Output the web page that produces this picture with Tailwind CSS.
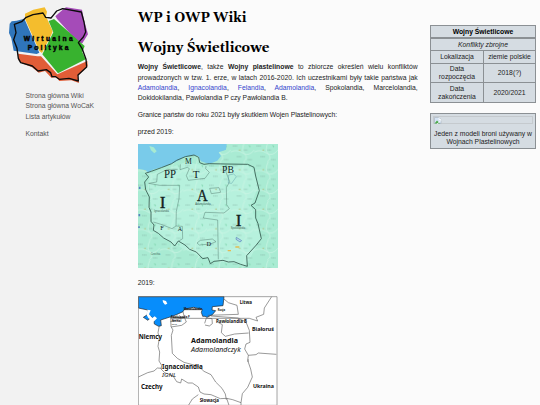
<!DOCTYPE html>
<html lang="pl">
<head>
<meta charset="utf-8">
<title>WP i OWP Wiki</title>
<script src="https://cdn.jsdelivr.net/npm/@tailwindcss/browser@4"></script>
</head>
<body class="w-[540px] h-[405px] overflow-hidden bg-[#fbfbfb] font-['Liberation_Sans',Arial,sans-serif] text-[6.8px] leading-[10.3px] text-[#222]">
<div class="flex h-[405px]">
  <aside class="w-[110px] shrink-0 bg-[#f2f2f2] text-[#555]">
    <svg class="block" width="110" height="90" viewBox="0 0 330 270">
      <path d="M29 71 L35 64 50 62 73 56 118 158 110 162 41 152 34 115 27 99Z" fill="#2f75bb"/>
      <path d="M75 41 L100 29 134 22 141 35 138 49 158 94 154 104 126 159 118 153 75 56Z" fill="#f4bd2d"/>
      <path d="M166 49 L188 29 198 22 246 29 252 60 264 103 247 130 236 129 172 58Z" fill="#a54bb8"/>
      <path d="M155 60 L162 57 254 138 247 157 257 178 174 220 127 163 160 97 146 63Z" fill="#38b22f"/>
      <path d="M54 161 L112 169 123 169 172 223 262 183 263 198 233 229 237 249 214 241 178 243 169 232 154 233 135 213 116 218 96 202 66 190 55 180Z" fill="#e15d37"/>
      <path d="M74 58L80 56 158 97 124 163 173 221M164 54L252 133" fill="none" stroke="#f7f7f2" stroke-width="0"/>
      <path d="M43 73 L65 65 77 53 99 44 129 39 137 52 153 54 162 43 170 33 188 26 244 36 252 66 257 96 250 111 235 128 246 145 258 178 260 201 234 225 235 243 207 235 178 238 167 230 156 230 152 218 139 209 114 213 97 198 62 188 55 175 51 145 41 119 48 98 45 82Z" fill="none" stroke="#0b0b0b" stroke-width="4" stroke-linejoin="round"/>
      <g font-family="Liberation Sans, Arial, sans-serif" font-weight="bold" font-size="20" fill="#050505" stroke="#050505" stroke-width="1.4">
        <text x="71" y="123" textLength="147">Wirtualna</text>
        <text x="83" y="150" textLength="122">Polityka</text>
      </g>
    </svg>
    <nav class="pl-[25.5px] pt-[1px] whitespace-nowrap">
      <div>Strona główna Wiki</div>
      <div>Strona główna WoCaK</div>
      <div>Lista artykułów</div>
      <div class="mt-[6.8px]">Kontakt</div>
    </nav>
  </aside>
  <main class="ml-[27.7px] w-[280px] shrink-0 whitespace-nowrap">
    <h1 class="mt-[8px] h-[20px] leading-[20px] font-[Gelasio,'Liberation_Serif',serif] font-bold text-black"><svg class="block overflow-visible" width="110" height="20"><text x="0" y="14.4" font-size="14.4" textLength="108.5" lengthAdjust="spacingAndGlyphs">WP i OWP Wiki</text></svg></h1>
    <h2 class="mt-[10px] h-[20px] leading-[20px] font-[Gelasio,'Liberation_Serif',serif] font-bold text-black"><svg class="block overflow-visible" width="132" height="20"><text x="0" y="14.2" font-size="14.4" textLength="131.5" lengthAdjust="spacingAndGlyphs">Wojny Świetlicowe</text></svg></h2>
    <div class="mt-[4.4px]">
      <div class="[text-align-last:justify]"><b>Wojny Świetlicowe</b>, także <b>Wojny plastelinowe</b> to zbiorcze określeń wielu konfliktów</div>
      <div class="[text-align-last:justify]">prowadzonych w tzw. 1. erze, w latach 2016-2020. Ich uczestnikami były takie państwa jak</div>
      <div class="[text-align-last:justify]"><span class="text-[#3344cc]">Adamolandia</span>, <span class="text-[#3344cc]">Ignacolandia</span>, <span class="text-[#3344cc]">Felandia</span>, <span class="text-[#3344cc]">Adamolandia</span>, Spokolandia, Marcelolandia,</div>
      <div>Dokidokilandia, Pawłolandia P czy Pawłolandia B.</div>
    </div>
    <p class="mt-[6.6px] tracking-[-0.03px]">Granice państw do roku 2021 były skutkiem Wojen Plastelinowych:</p>
    <p class="mt-[6.4px]">przed 2019:</p>
    <svg class="block mt-[7.3px]" width="140" height="124" viewBox="6 6 420 372">
      <defs>
        <pattern id="towns" width="71" height="59" patternUnits="userSpaceOnUse">
          <path d="M6 12h15M39 24h12M18 44h15M51 53h13" stroke="#668f82" stroke-width="2" stroke-dasharray="4 1" opacity=".55"/>
          <path d="M0 30Q18 21 36 33T71 24M42 0Q30 24 42 36T39 59" fill="none" stroke="#cdf5e5" stroke-width="2"/>
          <circle cx="27" cy="24" r="2.2" fill="#b2bd79"/><path d="M54 9l6 3-3 6z" fill="#86d8b4"/>
        </pattern>
      </defs>
      <path d="M6 6H426V378H6Z" fill="#a9ebd3"/>
      <path d="M40 100L150 60 230 75 345 70 368 130 345 190 375 290 330 370 210 352 100 300 50 265Z" fill="#bdf4e2" opacity=".65"/>
      <path d="M6 6H426V378H6Z" fill="url(#towns)"/>
      <path d="M6 6H272L270 23 248 31 255 42 244 56 220 66 208 62 195 58 187 42 173 40 146 45 120 59 92 71 50 83 37 92 29 85 6 80Z" fill="#79cbea"/>
      <path d="M40 12l13 4 9 12-7 6-10-9z" fill="#a7ead1"/>
      <path d="M28 94L46 88 76 77 107 65 122 55 148 44 174 39 188 46 191 62 204 67 220 65 270 66 335 67 354 76 359 102 370 146 357 183 345 190 359 203 359 228 366 245 376 290 361 309 332 341 334 373 314 367 294 359 277 360 261 355 234 358 223 365 216 347 200 350 181 330 161 322 147 309 127 297 116 312 105 300 83 288 67 274 52 265 54 249 45 238 45 210 39 196 40 165 29 143 26 120 38 105Z" fill="none" stroke="#31564b" stroke-width="2.5"/>
      <path d="M38 124L62 120 64 97 94 82 125 82M38 124L71 130 131 130 129 170 121 208 120 252 108 260 78 248 52 240M133 67L132 83 154 76 160 80 151 101 157 115 207 109 220 91 209 80 210 72M270 69L270 90 281 119 271 137 272 188 280 200 264 213 207 211 202 228 245 234 247 352M120 252L139 253 140 290 127 298M183 303L193 295 229 291 240 299 223 306 190 309ZM221 139L249 137 254 151 226 155Z" fill="none" stroke="#588174" stroke-width="1.5"/>
      <path d="M278 99l15-3 8 8-14 20-10-1z" fill="none" stroke="#65a4ad" stroke-width="1.5"/>
      <path d="M301 286l16 10-5 4-12-8z" fill="#b6d8e8" stroke="#5280b8" stroke-width="2"/><path d="M275 326h10M298 315h12" stroke="#e4bc51" stroke-width="4"/>
      <path d="M11 134v7M10 216v7M9 253v5" stroke="#5784bb" stroke-width="5"/>
      <g font-family="Liberation Serif, Times New Roman, serif" fill="#12221d" text-anchor="middle">
        <text x="157" y="65" font-size="23">M</text><text x="102" y="109" font-size="35" textLength="36" lengthAdjust="spacingAndGlyphs">PP</text>
        <text x="180" y="109" font-size="33">T</text><text x="276" y="93" font-size="29">PB</text>
        <text x="80" y="199" font-size="52" stroke="#12221d">I</text><text x="199" y="178" font-size="52" textLength="32" lengthAdjust="spacingAndGlyphs" stroke="#12221d">A</text>
        <text x="308" y="251" font-size="52" stroke="#12221d">I</text><text x="78" y="264" font-size="19">F</text>
        <text x="132" y="266" font-size="18">A</text><text x="218" y="313" font-size="19">D</text>
      </g>
      <g font-family="Liberation Sans, Arial, sans-serif" font-size="8" fill="#3e6558">
        <text x="54" y="210">Ignacolandia</text><text x="178" y="188">Adamolandia</text><text x="284" y="262">Spokolandia</text><text x="44" y="340">Czechia</text>
      </g>
    </svg>
    <p class="mt-[9.7px]">2019:</p>
    <svg class="block mt-[7.4px]" width="140" height="110" viewBox="6 6 420 330">
      <path d="M7 8H423V334H7Z" fill="#fff"/>
      <path d="M7 8H264L261 35 229 38 228 48 239 50 229 62 213 70 207 67 200 67 196 55 199 46 173 40 146 45 141 53 121 62 102 69 74 78 76 95 68 97 55 90 54 80 46 68 36 79 22 70 34 62 35 48 7 42Z" fill="#078dfb" stroke="#222" stroke-width="2"/>
      <path d="M80 18l10 3 4 8-7 3-6-7zM34 47l10 2-5 12 10 11 7-5 7 6-10 10-16-11-5-9z" fill="#fff"/>
      <g fill="none" stroke="#555" stroke-width="1.8">
        <path d="M70 95L66 116 70 133 66 157 71 174 69 201 77 214 75 225 86 236 112 247 122 263 134 267 137 255 156 267 169 267 187 279 192 294 204 300 225 302 253 314 272 313 290 317 315 326 319 299 335 280 349 249 344 225 335 199 337 184 326 165 330 150 342 145 340 109 330 84 306 72 225 66"/>
        <path d="M7 249L35 236 54 231 64 222 77 223M104 70L105 98 111 108 106 124 109 178 124 193 144 205 188 217 204 232 225 242 239 264 258 283 268 300 271 317M141 53L145 70 103 83M105 73H340L365 81 360 70 383 61 385 42 407 8M264 15L277 26 303 34 307 61 215 64M244 84L259 92 256 116 268 127 296 120 338 117M206 88l5-16 17 2 1 15-9 7-13-3M337 184l23-2 7-5 54 4M337 196l-1 8M145 70L151 84 137 94 105 99M187 302l-18 13-11 18M315 326v8M272 313l7 21"/>
      </g>
      <path d="M145 47H195M103 71H145" stroke="#222" stroke-width="2"/>
      <g font-family="Noto Sans, Open Sans, sans-serif" font-weight="bold" fill="#111">
        <text x="8" y="135" font-size="18.5" textLength="70" lengthAdjust="spacingAndGlyphs">Niemcy</text>
        <text x="165" y="147" font-size="22" textLength="141" lengthAdjust="spacingAndGlyphs">Adamolandia</text>
        <text x="165" y="175" font-size="20.5" font-weight="normal" font-style="italic" textLength="149" lengthAdjust="spacingAndGlyphs">Adamolandczyk</text>
        <text x="78" y="225" font-size="18.5" textLength="122" lengthAdjust="spacingAndGlyphs">Ignacolandia</text>
        <text x="78" y="250" font-size="18" font-weight="normal" font-style="italic" textLength="42" lengthAdjust="spacingAndGlyphs">IGNL</text>
        <text x="15" y="285" font-size="18.5" textLength="65" lengthAdjust="spacingAndGlyphs">Czechy</text>
        <text x="311" y="29" font-size="13" textLength="37" lengthAdjust="spacingAndGlyphs">Litwa</text>
        <text x="240" y="86" font-size="13" textLength="93" lengthAdjust="spacingAndGlyphs">Pawłolandia B</text>
        <text x="348" y="112" font-size="15" textLength="66" lengthAdjust="spacingAndGlyphs">Białoruś</text>
        <text x="351" y="283" font-size="16" textLength="63" lengthAdjust="spacingAndGlyphs">Ukraina</text>
        <text x="191" y="325" font-size="13" textLength="58" lengthAdjust="spacingAndGlyphs">Słowacja</text>
        <text x="245" y="50" font-size="8" textLength="22">Rosja</text>
        <text x="143" y="49" font-size="8" textLength="55">Marcelolandia</text>
        <text x="105" y="73" font-size="8" textLength="56">Pawłolandia P</text>
        <text x="107" y="84" font-size="8">Niemal</text><text x="107" y="94" font-size="7" font-weight="normal">język</text>
      </g>
      <path d="M7 8H423V334H7Z" fill="none" stroke="#777" stroke-width="2"/>
    </svg>
  </main>
  <div class="ml-[12.3px] w-[106px] mt-[25px] shrink-0 text-center leading-[8px] text-[#222] whitespace-nowrap">
    <div class="grid grid-cols-[52px_51px] gap-px bg-[#8b9094] border border-[#8b9094] w-[106px] *:bg-[#d5dce2] *:flex *:items-center *:justify-center">
      <div class="col-span-2 h-[12px] font-bold text-black border-b border-[#8b9094]">Wojny Świetlicowe</div>
      <div class="col-span-2 h-[11px] italic">Konflikty zbrojne</div>
      <div class="h-[12px]">Lokalizacja</div><div>ziemie polskie</div>
      <div class="h-[18px]">Data<br>rozpoczęcia</div><div>2018(?)</div>
      <div class="h-[19px]">Data<br>zakończenia</div><div>2020/2021</div>
    </div>
    <div class="mt-[10px] h-[36px] w-[106px] border border-[#8b9094] bg-[#d5dce2] p-[2px]">
      <div class="h-[8px] border border-[#c5cace]">
        <svg class="block" width="8" height="7" viewBox="0 0 16 14"><path d="M1 1H10L14 5V13H1Z" fill="#d5e4f4" stroke="#9da9b4"/><path d="M1 13L6 7 12 13Z" fill="#4eaa4b"/><path d="M10 1V5H14M6 14L15 6" stroke="#fff" stroke-width="1.5" fill="none"/></svg>
      </div>
      <div class="mt-[6px]">Jeden z modeli broni używany w<br>Wojnach Plastelinowych</div>
    </div>
  </div>
</div>
</body>
</html>
